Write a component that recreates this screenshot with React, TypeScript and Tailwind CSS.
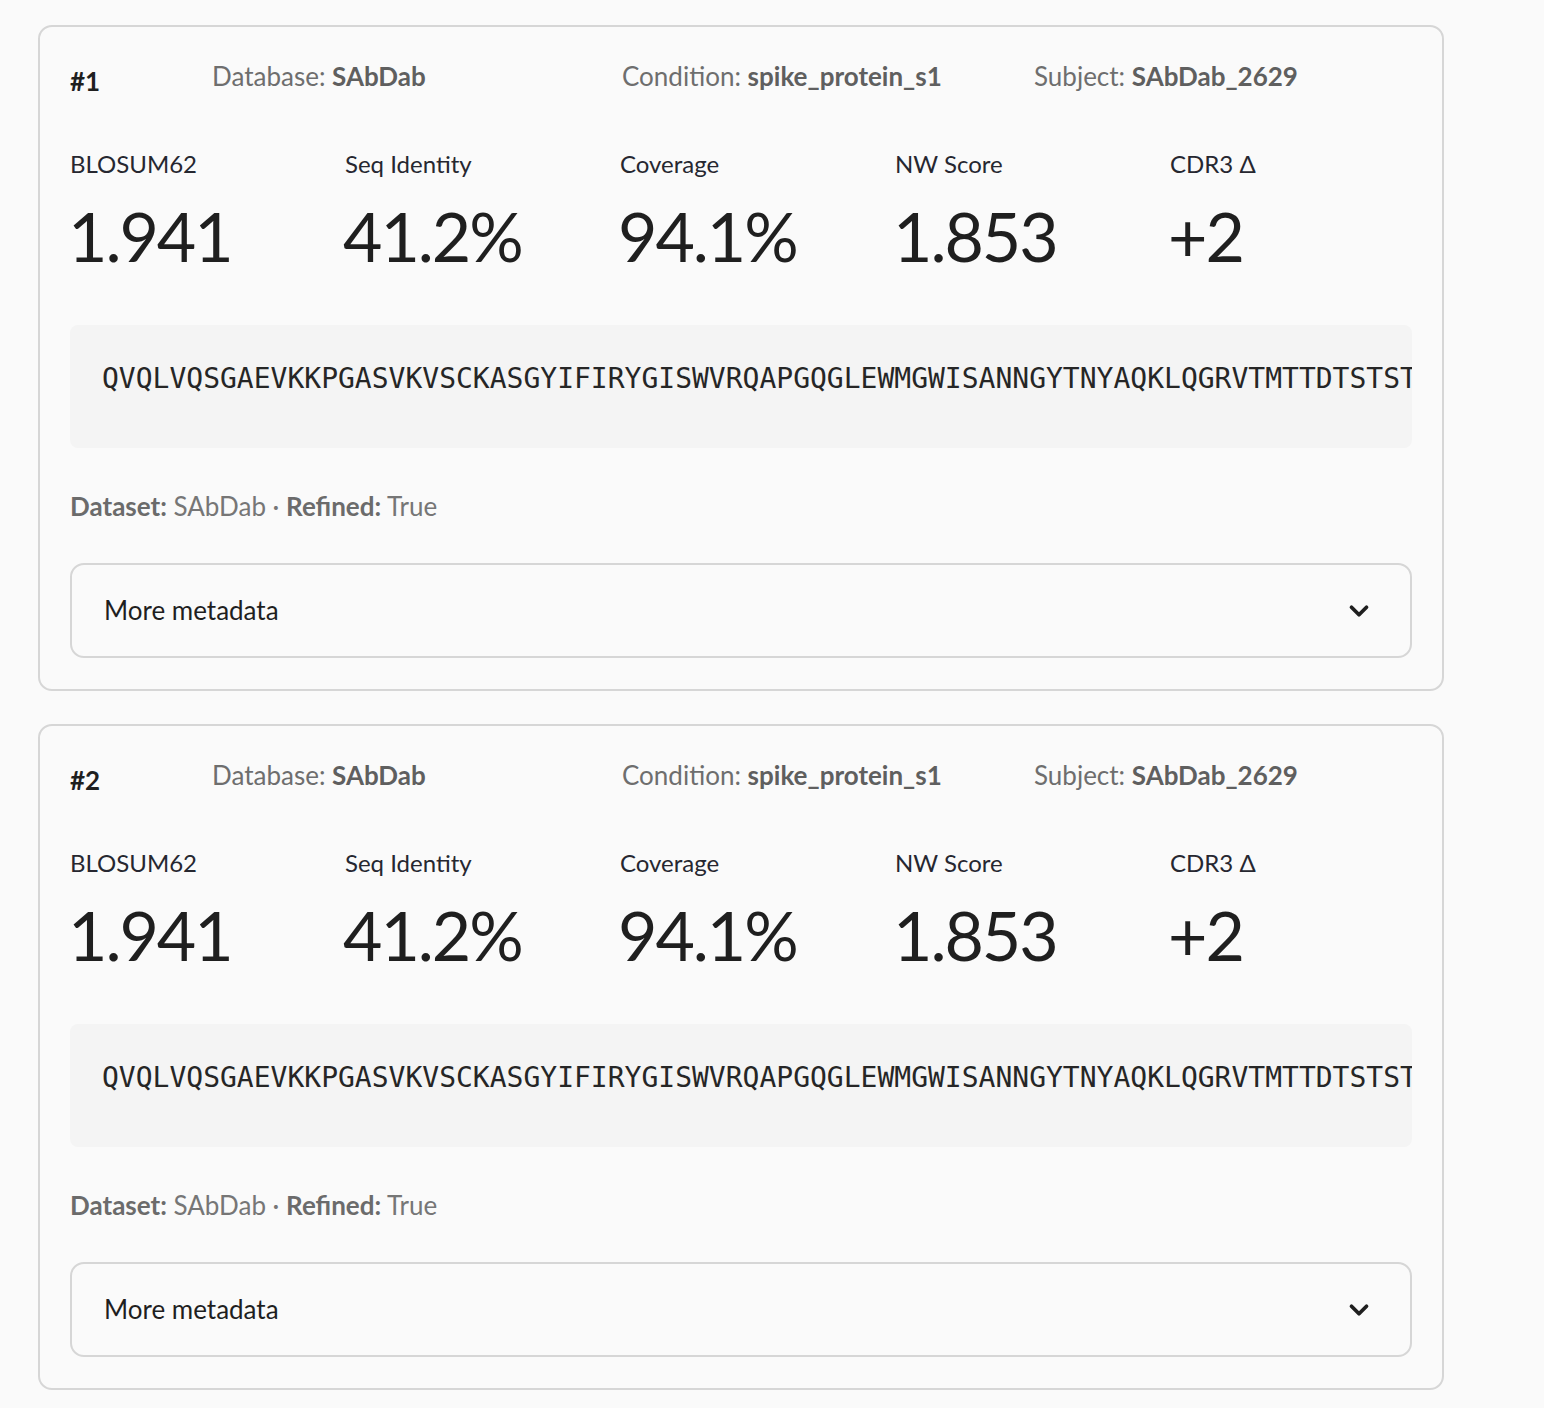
import { ChevronDown } from "lucide-react";

type Hit = {
  rank: number;
  database: string;
  condition: string;
  subject: string;
  blosum: string;
  identity: string;
  coverage: string;
  nw: string;
  cdr3: string;
  sequence: string;
  dataset: string;
  refined: string;
};

const SEQ =
  "QVQLVQSGAEVKKPGASVKVSCKASGYIFIRYGISWVRQAPGQGLEWMGWISANNGYTNYAQKLQGRVTMTTDTSTSTAYMELRSLRSDDTAVYYCARDGYSSGWYFDYWGQGTLVTVSS";

const hits: Hit[] = [1, 2].map((rank) => ({
  rank,
  database: "SAbDab",
  condition: "spike_protein_s1",
  subject: "SAbDab_2629",
  blosum: "1.941",
  identity: "41.2%",
  coverage: "94.1%",
  nw: "1.853",
  cdr3: "+2",
  sequence: SEQ,
  dataset: "SAbDab",
  refined: "True",
}));

const sans = "font-['Lato','Noto_Sans',sans-serif]";

const Metric = ({ label, value }: { label: string; value: string }) => (
  <div className="flex flex-col">
    <div className="text-[24px] leading-[30px] text-[#262730]">{label}</div>
    <div className="mt-[16px] -ml-[2px] text-[68px] leading-[82px] tracking-[-0.03em] text-[#1f1f1f]">
      {value}
    </div>
  </div>
);

const HitCard = ({ hit }: { hit: Hit }) => (
  <div className="rounded-[14px] border-2 border-[#d6d6d6] px-[30px] pt-[30px] pb-[31px]">
    {/* header row: rank + source info */}
    <div className="grid h-[39px] grid-cols-[142px_410px_412px_1fr] items-start text-[26px] leading-[39px] text-[#6e6e6e]">
      <div className="pt-[5px] font-bold text-[#1f1f1f]">#{hit.rank}</div>
      <div>
        Database: <span className="font-bold text-[#5f5f5f]">{hit.database}</span>
      </div>
      <div>
        Condition: <span className="font-bold text-[#5f5f5f]">{hit.condition}</span>
      </div>
      <div>
        Subject: <span className="font-bold text-[#5f5f5f]">{hit.subject}</span>
      </div>
    </div>

    <div className="mt-[53px] grid grid-cols-5 gap-[33px]">
      <Metric label="BLOSUM62" value={hit.blosum} />
      <Metric label="Seq Identity" value={hit.identity} />
      <Metric label="Coverage" value={hit.coverage} />
      <Metric label="NW Score" value={hit.nw} />
      <Metric label="CDR3 Δ" value={hit.cdr3} />
    </div>

    {/* sequence block, clipped like a scrolling code box */}
    <div className="mt-[48px] flex h-[123px] items-center overflow-hidden rounded-[8px] bg-[#f4f4f4] pb-[16px] pl-[32px]">
      <pre className="font-['DejaVu_Sans_Mono','Liberation_Mono',monospace] text-[28px] leading-[40px] text-[#262626]">
        {hit.sequence}
      </pre>
    </div>

    <div className="mt-[40px] text-[26px] leading-[36px] text-[#767676]">
      <span className="font-bold text-[#6b6b6b]">Dataset:</span> {hit.dataset} ·{" "}
      <span className="font-bold text-[#6b6b6b]">Refined:</span> {hit.refined}
    </div>

    <div className="mt-[39px] flex h-[95px] items-center justify-between rounded-[14px] border-2 border-[#d6d6d6] pl-[32px] pr-[36px]">
      <span className="text-[26px] text-[#1f1f1f]">More metadata</span>
      <ChevronDown size={30} strokeWidth={3} className="text-[#1f1f1f]" />
    </div>
  </div>
);

export default function App() {
  return (
    <div className={`min-h-screen w-[1544px] bg-[#fafafa] pt-[25px] pl-[38px] ${sans}`}>
      <div className="flex w-[1406px] flex-col gap-[33px]">
        {hits.map((h) => (
          <HitCard key={h.rank} hit={h} />
        ))}
      </div>
    </div>
  );
}
